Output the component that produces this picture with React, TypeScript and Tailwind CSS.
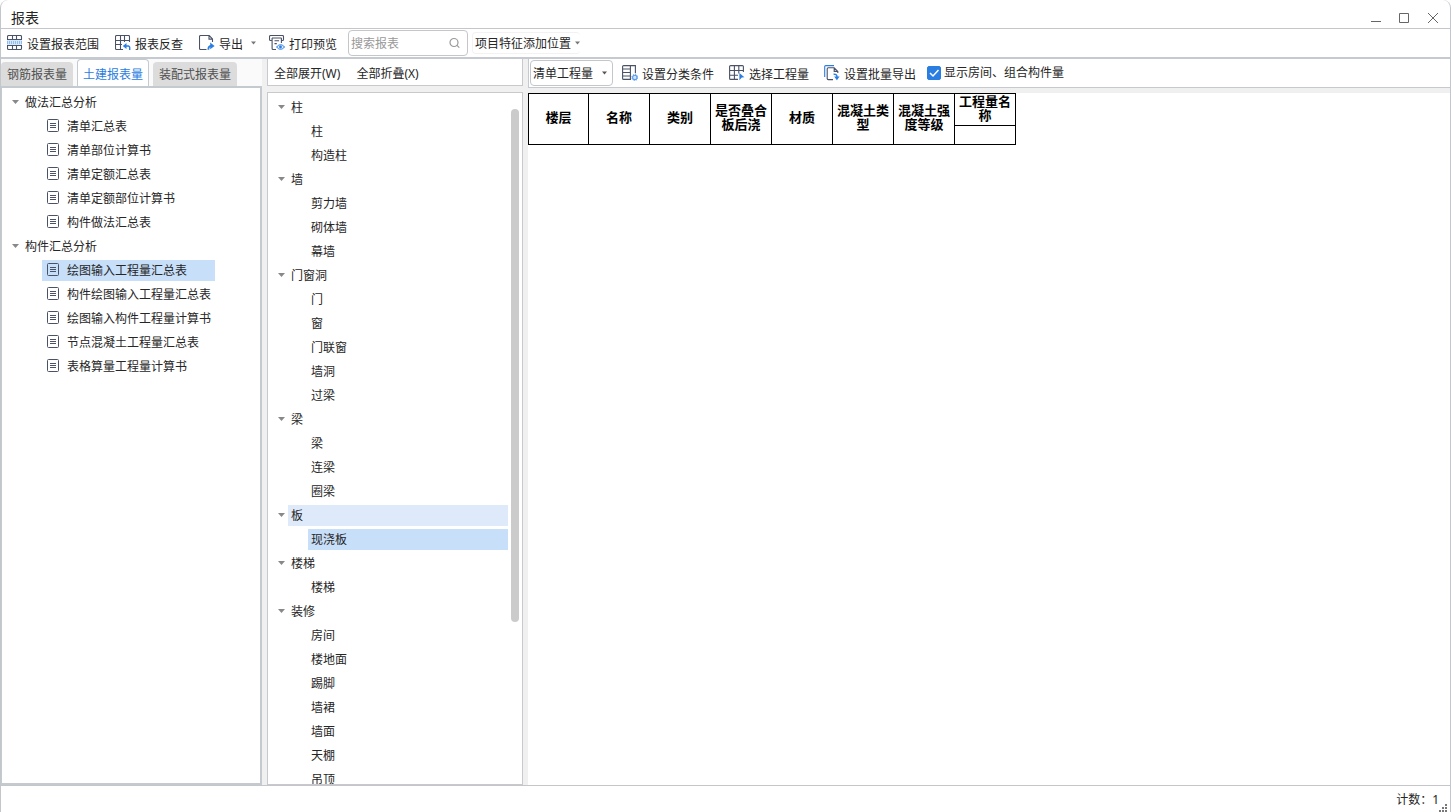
import { useState } from 'react';
import type { ReactNode } from 'react';

type TreeGroup = { name: string; children: string[] };

const reportTree: TreeGroup[] = [
  {
    name: '做法汇总分析',
    children: ['清单汇总表', '清单部位计算书', '清单定额汇总表', '清单定额部位计算书', '构件做法汇总表'],
  },
  {
    name: '构件汇总分析',
    children: [
      '绘图输入工程量汇总表',
      '构件绘图输入工程量汇总表',
      '绘图输入构件工程量计算书',
      '节点混凝土工程量汇总表',
      '表格算量工程量计算书',
    ],
  },
];

const componentTree: TreeGroup[] = [
  { name: '柱', children: ['柱', '构造柱'] },
  { name: '墙', children: ['剪力墙', '砌体墙', '幕墙'] },
  { name: '门窗洞', children: ['门', '窗', '门联窗', '墙洞', '过梁'] },
  { name: '梁', children: ['梁', '连梁', '圈梁'] },
  { name: '板', children: ['现浇板'] },
  { name: '楼梯', children: ['楼梯'] },
  { name: '装修', children: ['房间', '楼地面', '踢脚', '墙裙', '墙面', '天棚', '吊顶'] },
];

const columns = ['楼层', '名称', '类别', '是否叠合板后浇', '材质', '混凝土类型', '混凝土强度等级'];

const tabs = ['钢筋报表量', '土建报表量', '装配式报表量'];

function Icon({ children }: { children: ReactNode }) {
  return (
    <svg width="16" height="16" viewBox="0 0 16 16" fill="none" stroke="#4a5266" strokeWidth="1.1" className="shrink-0">
      {children}
    </svg>
  );
}

function RangeIcon() {
  return (
    <Icon>
      <rect x="0" y="5" width="15" height="5" fill="#d6e7fc" stroke="none" />
      <path d="M.5 4.5v-3a1 1 0 0 1 1-1h12a1 1 0 0 1 1 1v3M5.5.5v4M9.5.5v4M0 4.5h15M.5 10.5v3a1 1 0 0 0 1 1h12a1 1 0 0 0 1-1v-3M5.5 10.5v4M9.5 10.5v4M0 10.5h15" />
      <path d="M0 7.5h15" stroke="#8fbcf2" strokeDasharray="1 1" strokeWidth="3" />
    </Icon>
  );
}

function CheckBackIcon() {
  return (
    <Icon>
      <path d="M14.5 7V1.5a1 1 0 0 0-1-1h-12a1 1 0 0 0-1 1v12a1 1 0 0 0 1 1H8M.5 5.5h14M.5 9.5H7M5.5.5v14M9.5.5V7" />
      <path d="M9 11h4.2a1.5 1.5 0 0 1 1.5 1.5V15" stroke="#2a7de1" strokeWidth="1.4" />
      <path d="M11.5 8v6l-3.7-3z" fill="#2a7de1" stroke="none" />
    </Icon>
  );
}

function ExportIcon() {
  return (
    <Icon>
      <path d="M7.5 14.5h-6a1 1 0 0 1-1-1v-12a1 1 0 0 1 1-1h8.7l3.3 3.4V7M10 .5v3.6h3.5" />
      <path d="M9.4 14.8c-.2-2.6 1-4 3.2-4.2" stroke="#2a7de1" strokeWidth="1.8" />
      <path d="M11.2 7.4 15.6 11l-4.4 3.2z" fill="#2a7de1" stroke="none" />
    </Icon>
  );
}

function PrintPreviewIcon() {
  return (
    <Icon>
      <path d="M2.5 5.5h-1a1 1 0 0 1-1-1v-3a1 1 0 0 1 1-1h12a1 1 0 0 1 1 1v3a1 1 0 0 1-1 1h-1M3 3h9.5M3.1 3v10.5a1 1 0 0 0 1 1H7M12.4 3v5M5.5 5.8h4.6M5.5 8.6h2.3" />
      <path d="M7.6 12c2.1-3 5.8-3 7.9 0-2.1 3-5.8 3-7.9 0z" fill="#e3effd" stroke="#2a7de1" strokeWidth="1" />
      <circle cx="11.5" cy="12" r="1.4" fill="#2a7de1" stroke="none" />
    </Icon>
  );
}

function ClassifyIcon() {
  return (
    <Icon>
      <path d="M9 14.4H1.6a1 1 0 0 1-1-1V1.6a1 1 0 0 1 1-1h11.8v7.6M8.4.6v13.8M.6 4H8M.6 7.5H8M.6 11H8" />
      <circle cx="12.8" cy="12.4" r="2.2" fill="#cfe3fb" stroke="#5b9bea" />
      <circle cx="12.8" cy="12.4" r="3" stroke="#5b9bea" strokeWidth="1" strokeDasharray="1.2 1.15" />
    </Icon>
  );
}

function PickIcon() {
  return (
    <Icon>
      <path d="M14.4 7V1.6a1 1 0 0 0-1-1H1.6a1 1 0 0 0-1 1v11.8a1 1 0 0 0 1 1H9M.6 5.5h13.8M.6 10.2H9M5.4.6v13.8M9.8.6v8" />
      <path d="M10.4 8l5 4.2-2.6.4-2.4 2.6z" fill="#2a7de1" stroke="none" />
    </Icon>
  );
}

function BatchExportIcon() {
  return (
    <Icon>
      <path d="M.7 12V1.6a1 1 0 0 1 1-1H10" stroke="#2a7de1" />
      <path d="M9 14.6H4.2a1 1 0 0 1-1-1V3.8a1 1 0 0 1 1-1h6l3.6 3.6V8M10.2 2.8v3.6h3.6" />
      <path d="M9.6 9.2c2.4-.2 3.4.8 3.4 3" stroke="#2a7de1" strokeWidth="1.5" />
      <path d="M10.2 11.6h5.4l-2.7 3.6z" fill="#2a7de1" stroke="none" />
    </Icon>
  );
}

function ReportIcon() {
  return (
    <svg width="12" height="13" viewBox="0 0 12 13" fill="none" stroke="#4a5266" className="mb-0.5 shrink-0">
      <rect x=".5" y=".5" width="11" height="12" rx="1" />
      <path d="M3 4.5h6M3 6.5h6M3 8.5h6" />
    </svg>
  );
}

function Caret({ className }: { className?: string }) {
  return (
    <svg width="7" height="4" viewBox="0 0 7 4" className={className} aria-hidden="true">
      <path d="M0 0h7L3.5 4z" fill="currentColor" />
    </svg>
  );
}

function ToolButton({ icon, label }: { icon: ReactNode; label: string }) {
  return (
    <button className="flex items-center gap-1 whitespace-nowrap">
      {icon}
      <span className="pt-[3px]">{label}</span>
    </button>
  );
}

function App() {
  const [activeTab, setActiveTab] = useState('土建报表量');
  const [report, setReport] = useState('绘图输入工程量汇总表');
  const [component, setComponent] = useState('板/现浇板');
  const [showRooms, setShowRooms] = useState(true);

  return (
    <div className="flex h-screen flex-col overflow-hidden rounded-t-lg border-x border-[#c3c6cb] bg-white font-['Noto_Sans','Noto_Sans_CJK_SC',sans-serif] text-xs text-[#262626]">
      {/* title bar */}
      <header className="flex h-[29px] shrink-0 items-end justify-between border-b border-[#c5c6ca] pr-[11px] pl-[10px]">
        <h1 className="text-sm leading-5">报表</h1>
        <div className="flex items-center gap-[18px] pb-1 text-[#666]">
          <button aria-label="最小化">
            <svg width="10" height="12" viewBox="0 0 10 12" stroke="currentColor">
              <path d="M0 9.5h10" />
            </svg>
          </button>
          <button aria-label="最大化">
            <svg width="10" height="12" viewBox="0 0 10 12" fill="none" stroke="currentColor">
              <path d="M.5 1.5h9v9h-9z" />
            </svg>
          </button>
          <button aria-label="关闭">
            <svg width="12" height="12" viewBox="0 0 12 12" stroke="currentColor">
              <path d="M1 1l10 10M11 1L1 11" />
            </svg>
          </button>
        </div>
      </header>

      {/* main toolbar */}
      <div className="flex h-[30px] shrink-0 items-center border-b-2 border-[#c5c9d0] pl-[6px]">
        <div className="flex items-center gap-4">
          <ToolButton icon={<RangeIcon />} label="设置报表范围" />
          <ToolButton icon={<CheckBackIcon />} label="报表反查" />
          <button className="flex items-center gap-1 whitespace-nowrap">
            <ExportIcon />
            <span className="pt-[3px]">导出</span>
            <Caret className="ml-1 w-[5px] text-[#777]" />
          </button>
        </div>
        <div className="ml-[13px]">
          <ToolButton icon={<PrintPreviewIcon />} label="打印预览" />
        </div>
        <label className="ml-[11px] flex h-[26px] w-[120px] items-center rounded-sm border border-[#c5c6ca] pr-[6px] pl-[2px]">
          <input
            type="text"
            aria-label="搜索报表"
            placeholder="搜索报表"
            className="w-0 flex-1 pt-0.5 outline-none placeholder:text-[#999]"
          />
          <svg width="12" height="12" viewBox="0 0 12 12" fill="none" stroke="#999" strokeWidth="1.2">
            <circle cx="5" cy="5.5" r="4" />
            <path d="M8 8.4l2.3 2.3" />
          </svg>
        </label>
        <button className="ml-1 flex h-[22px] items-center gap-1 rounded-sm border border-r-0 border-[#f2f2f2] pl-[2px] whitespace-nowrap">
          <span className="pt-0.5">项目特征添加位置</span>
          <Caret className="w-[5px] text-[#777]" />
        </button>
      </div>

      <main className="flex min-h-0 flex-1 bg-[#f0f0f0]">
        {/* report list */}
        <section className="flex w-[261px] shrink-0 flex-col bg-[#fafafa]">
          <div role="tablist" className="flex h-[27px] shrink-0 items-end gap-1">
            {tabs.map((tab) => (
              <button
                key={tab}
                role="tab"
                aria-selected={tab === activeTab}
                onClick={() => setActiveTab(tab)}
                className={
                  tab === activeTab
                    ? 'h-[27px] rounded-t border border-b-0 border-[#c5c9d0] bg-white px-[5px] pt-1 text-[#2a7de1]'
                    : 'h-6 rounded-t bg-[#dcdcdc] px-[6px] pt-0.5 text-[#505050]'
                }
              >
                {tab}
              </button>
            ))}
          </div>
          <div className="min-h-0 flex-1 overflow-y-auto border-2 border-l border-[#c5c9d0] bg-white pt-[2px]">
            <ul className="w-fit pl-[10px]">
              {reportTree.map((group) => (
                <li key={group.name}>
                  <button className="flex h-6 items-center gap-[6px]">
                    <Caret className="text-[#888]" />
                    <span className="pt-0.5">{group.name}</span>
                  </button>
                  <ul className="pl-[30px]">
                    {group.children.map((name) => (
                      <li key={name} className="flex h-6 items-center">
                        <button
                          onClick={() => setReport(name)}
                          className={`flex h-[21px] w-full items-center gap-2 pr-1 pl-[5px] whitespace-nowrap ${
                            name === report ? 'bg-[#c8dff9]' : ''
                          }`}
                        >
                          <ReportIcon />
                          <span className="pt-0.5">{name}</span>
                        </button>
                      </li>
                    ))}
                  </ul>
                </li>
              ))}
            </ul>
          </div>
        </section>

        {/* component tree */}
        <section className="ml-[5px] flex w-64 shrink-0 flex-col">
          <div className="flex h-[27px] shrink-0 items-center gap-4 border border-t-0 border-[#c8c9cc] bg-white px-[6px] pt-[3px]">
            <button>全部展开(W)</button>
            <button>全部折叠(X)</button>
          </div>
          <div className="mt-[6px] flex min-h-0 flex-1 border border-[#c8c9cc] bg-white pr-[3px]">
            <ul className="flex-1 overflow-y-auto pt-[2px] pr-[3px] pl-[10px] [scrollbar-width:none]">
              {componentTree.map((group) => (
                <li key={group.name}>
                  <div className="flex h-6 items-center gap-[3px]">
                    <Caret className="text-[#888]" />
                    <button
                      className={`h-[21px] flex-1 pt-0.5 pl-[3px] text-left ${
                        component.startsWith(group.name + '/') ? 'bg-[#dee9fa]' : ''
                      }`}
                    >
                      {group.name}
                    </button>
                  </div>
                  <ul className="pl-[30px]">
                    {group.children.map((name) => (
                      <li key={name} className="flex h-6 items-center">
                        <button
                          onClick={() => setComponent(`${group.name}/${name}`)}
                          className={`h-[21px] w-full pt-0.5 pl-[3px] text-left ${
                            component === `${group.name}/${name}` ? 'bg-[#c8dff9]' : ''
                          }`}
                        >
                          {name}
                        </button>
                      </li>
                    ))}
                  </ul>
                </li>
              ))}
            </ul>
            <div className="w-2 pt-4">
              <div className="h-[76%] rounded-full bg-[#cbcbcb]" />
            </div>
          </div>
        </section>

        {/* quantity report */}
        <section className="ml-[5px] flex min-w-0 flex-1 flex-col">
          <div className="flex h-[29px] shrink-0 items-center border-b border-l border-[#c5c9d0] bg-white pl-px">
            <div className="grid items-center">
              <select
                aria-label="工程量类型"
                className="col-start-1 row-start-1 h-[26px] w-[83px] appearance-none rounded border border-[#c5c6ca] bg-white pt-0.5 pl-[2px]"
              >
                <option>清单工程量</option>
                <option>定额工程量</option>
              </select>
              <Caret className="pointer-events-none col-start-1 row-start-1 mr-[6px] w-[5px] justify-self-end text-[#555]" />
            </div>
            <div className="ml-[9px] flex items-center gap-[15px]">
              <ToolButton icon={<ClassifyIcon />} label="设置分类条件" />
              <ToolButton icon={<PickIcon />} label="选择工程量" />
              <ToolButton icon={<BatchExportIcon />} label="设置批量导出" />
            </div>
            <label className="ml-[11px] flex items-center gap-[3px] whitespace-nowrap">
              <span className="grid">
                <input
                  type="checkbox"
                  checked={showRooms}
                  onChange={(e) => setShowRooms(e.target.checked)}
                  className="col-start-1 row-start-1 size-[14px] appearance-none rounded-xs border border-[#2a7de1] checked:bg-[#2a7de1]"
                />
                {showRooms && (
                  <svg
                    viewBox="0 0 14 14"
                    fill="none"
                    stroke="white"
                    strokeWidth="1.5"
                    className="pointer-events-none col-start-1 row-start-1 size-[14px]"
                  >
                    <path d="M3 7l3 3 5.5-6" />
                  </svg>
                )}
              </span>
              显示房间、组合构件量
            </label>
          </div>
          <div className="mt-[5px] min-h-0 flex-1 overflow-auto bg-white">
            <table className="w-[488px] table-fixed border-collapse text-[13px] leading-[14px] font-bold text-black">
              <thead>
                <tr className="h-8">
                  {columns.map((col) => (
                    <th key={col} rowSpan={2} className="border border-black px-[3px] pb-[5px] first:w-[60px]">
                      {col}
                    </th>
                  ))}
                  <th className="border border-black px-[3px] align-top">工程量名称</th>
                </tr>
                <tr className="h-[19px]">
                  <th className="border border-black" />
                </tr>
              </thead>
            </table>
          </div>
        </section>
      </main>

      {/* status bar */}
      <footer className="flex h-[27px] shrink-0 items-center justify-end border-t border-[#c5c6ca] pr-[3px]">
        <span className="pt-0.5">计数：1</span>
        <svg width="8" height="8" viewBox="0 0 8 8" fill="#777" className="self-end">
          <path d="M6 0h2v2H6zM3 3h2v2H3zM6 3h2v2H6zM0 6h2v2H0zM3 6h2v2H3zM6 6h2v2H6z" />
        </svg>
      </footer>
    </div>
  );
}

export default App;
